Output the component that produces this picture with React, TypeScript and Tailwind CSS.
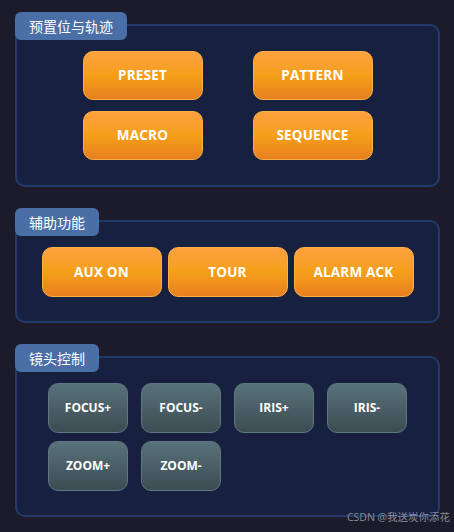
import React from "react";

const font = { fontFamily: '"Open Sans", "Noto Sans CJK SC", sans-serif' };

function Section({
  title,
  children,
  last,
  pb,
}: {
  title: string;
  children: React.ReactNode;
  last?: boolean;
  pb: string;
}) {
  return (
    <div className={last ? "" : "mb-[21px]"}>
      <div className="relative z-10 inline-flex h-[28px] items-center rounded-[6px] bg-[#4a6ea6] px-[14px] text-[14px] text-white">
        {title}
      </div>
      <div
        className={`-mt-[16px] rounded-[10px] border-2 border-[#233a6a] bg-[#17213f] pt-[25px] ${pb}`}
      >
        {children}
      </div>
    </div>
  );
}

function OrangeBtn({ label, tall }: { label: string; tall?: boolean }) {
  return (
    <button
      className={`flex w-[120px] items-center justify-center rounded-[10px] border border-[#f8b048] bg-gradient-to-b from-[#fda13e] via-[#f59f18] to-[#e77f1f] text-[13.5px] font-bold tracking-[0.2px] text-white ${
        tall ? "h-[50px]" : "h-[49px]"
      }`}
    >
      {label}
    </button>
  );
}

function GrayBtn({ label }: { label: string }) {
  return (
    <button className="flex h-[50px] w-[80px] items-center justify-center rounded-[10px] border border-[#5d7783] bg-gradient-to-b from-[#58727a] to-[#3d4c53] text-[12px] font-bold text-white">
      {label}
    </button>
  );
}

export default function App() {
  return (
    <div
      className="relative h-[532px] w-[454px] bg-[#1b1b2c] px-[15px] pt-[12px]"
      style={font}
    >
      <div className="w-[425px]">
        <Section title="预置位与轨迹" pb="pb-[25px]">
          <div className="grid grid-cols-[repeat(2,120px)] justify-center gap-x-[50px] gap-y-[11px]">
            <OrangeBtn label="PRESET" />
            <OrangeBtn label="PATTERN" />
            <OrangeBtn label="MACRO" />
            <OrangeBtn label="SEQUENCE" />
          </div>
        </Section>
        <Section title="辅助功能" pb="pb-[24px]">
          <div className="flex justify-center gap-[6px]">
            <OrangeBtn label="AUX ON" tall />
            <OrangeBtn label="TOUR" tall />
            <OrangeBtn label="ALARM ACK" tall />
          </div>
        </Section>
        <Section title="镜头控制" pb="pb-[24px]" last>
          <div className="grid grid-cols-[repeat(4,80px)] justify-center gap-x-[13px] gap-y-[8px]">
            <GrayBtn label="FOCUS+" />
            <GrayBtn label="FOCUS-" />
            <GrayBtn label="IRIS+" />
            <GrayBtn label="IRIS-" />
            <GrayBtn label="ZOOM+" />
            <GrayBtn label="ZOOM-" />
          </div>
        </Section>
      </div>
      <div className="absolute bottom-[6px] right-[4px] text-[10.5px] text-[#8b8b98]">
        CSDN @我送炭你添花
      </div>
    </div>
  );
}
